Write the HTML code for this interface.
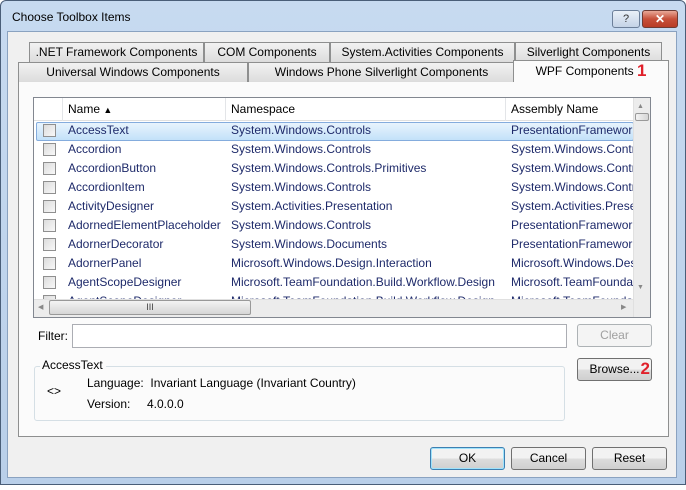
<!DOCTYPE html><html><head><style>
*{box-sizing:border-box;margin:0;padding:0}
body{width:686px;height:490px;overflow:hidden;background:#fff;font-family:"Liberation Sans",sans-serif;font-size:12px;color:#000;position:relative}
.a{position:absolute}
.win{left:0;top:0;width:686px;height:485px;background:linear-gradient(#c7daf0,#b9cfe9);border:1px solid #4a5e78;border-radius:6px 6px 0 0}
.body{left:7px;top:31px;width:670px;height:447px;background:#f0f0f0;border:1px solid #8aa2c0}
.tab{position:absolute;height:20px;border:1px solid #8e8f8f;border-bottom:none;background:linear-gradient(#f2f2f2,#dcdcdc);text-align:center;line-height:19px;font-size:12px}
.btn{position:absolute;height:23px;border:1px solid #707070;border-radius:3px;background:linear-gradient(#f2f2f2 50%,#dddddd 50%,#cfcfcf);text-align:center;line-height:21px}
.row{position:absolute;left:0;width:600px;height:19px;line-height:19px;color:#1e2a6a;white-space:nowrap}
.row span{position:absolute}
.cb{position:absolute;left:9px;top:3px;width:13px;height:13px;border:1px solid #8f8f8f;background:linear-gradient(135deg,#dcdcdc,#f8f8f8)}
</style></head><body>
<div class="a win"></div>
<div class="a" style="left:12px;top:10px;font-size:12px">Choose Toolbox Items</div>
<div class="a" style="left:612px;top:10px;width:28px;height:18px;border:1px solid #6c7f99;border-radius:3px;background:linear-gradient(#e9f0f8,#c4d3e6);text-align:center;font-size:11px;line-height:16px;color:#333">?</div>
<div class="a" style="left:642px;top:10px;width:36px;height:18px;border:1px solid #6e3b34;border-radius:3px;background:linear-gradient(#e8a898,#c7503a 50%,#b83c26);text-align:center;color:#fff;font-weight:bold;line-height:16px">✕</div>
<div class="a body"></div>
<!-- panel -->
<div class="a" style="left:18px;top:80px;width:651px;height:357px;background:#fbfbfb;border:1px solid #8e8f8f"></div>
<div class="tab" style="left:29px;top:42px;width:175px">.NET Framework Components</div>
<div class="tab" style="left:204px;top:42px;width:126px">COM Components</div>
<div class="tab" style="left:330px;top:42px;width:185px">System.Activities Components</div>
<div class="tab" style="left:515px;top:42px;width:147px">Silverlight Components</div>
<div class="tab" style="left:18px;top:62px;width:230px">Universal Windows Components</div>
<div class="tab" style="left:248px;top:62px;width:267px">Windows Phone Silverlight Components</div>
<div class="tab" style="left:513px;top:60px;width:156px;height:22px;background:#fbfbfb;border-color:#8e8f8f">WPF Components <b style="color:#e0202a;font-size:17px;vertical-align:-1px">1</b></div>
<!-- list -->
<div class="a" style="left:33px;top:97px;width:618px;height:221px;border:1px solid #828790;background:#fff;overflow:hidden">
 <div class="a" style="left:0;top:0;width:600px;height:23px;border-bottom:1px solid #e0e0e0;background:#fff">
  <div class="a" style="left:28px;top:0;width:1px;height:23px;background:#e3e5e8"></div>
  <div class="a" style="left:191px;top:0;width:1px;height:23px;background:#e3e5e8"></div>
  <div class="a" style="left:471px;top:0;width:1px;height:23px;background:#e3e5e8"></div>
  <span class="a" style="left:34px;top:4px">Name <span style="font-size:9px">▲</span></span>
  <span class="a" style="left:197px;top:4px">Namespace</span>
  <span class="a" style="left:477px;top:4px">Assembly Name</span>
 </div>
 <div class="a" style="left:2px;top:24px;width:598px;height:19px;border:1px solid #84acdd;border-radius:2px;background:linear-gradient(#e8f4fd,#c3e1f9)"></div>
 <div style="position:absolute;left:0;top:23px">
 <div class="row" style="top:0"><div class="cb"></div><span style="left:34px">AccessText</span><span style="left:197px">System.Windows.Controls</span><span style="left:477px">PresentationFramework</span></div>
 <div class="row" style="top:19px"><div class="cb"></div><span style="left:34px">Accordion</span><span style="left:197px">System.Windows.Controls</span><span style="left:477px">System.Windows.Controls</span></div>
 <div class="row" style="top:38px"><div class="cb"></div><span style="left:34px">AccordionButton</span><span style="left:197px">System.Windows.Controls.Primitives</span><span style="left:477px">System.Windows.Controls</span></div>
 <div class="row" style="top:57px"><div class="cb"></div><span style="left:34px">AccordionItem</span><span style="left:197px">System.Windows.Controls</span><span style="left:477px">System.Windows.Controls</span></div>
 <div class="row" style="top:76px"><div class="cb"></div><span style="left:34px">ActivityDesigner</span><span style="left:197px">System.Activities.Presentation</span><span style="left:477px">System.Activities.Presentation</span></div>
 <div class="row" style="top:95px"><div class="cb"></div><span style="left:34px">AdornedElementPlaceholder</span><span style="left:197px">System.Windows.Controls</span><span style="left:477px">PresentationFramework</span></div>
 <div class="row" style="top:114px"><div class="cb"></div><span style="left:34px">AdornerDecorator</span><span style="left:197px">System.Windows.Documents</span><span style="left:477px">PresentationFramework</span></div>
 <div class="row" style="top:133px"><div class="cb"></div><span style="left:34px">AdornerPanel</span><span style="left:197px">Microsoft.Windows.Design.Interaction</span><span style="left:477px">Microsoft.Windows.Design</span></div>
 <div class="row" style="top:152px"><div class="cb"></div><span style="left:34px">AgentScopeDesigner</span><span style="left:197px">Microsoft.TeamFoundation.Build.Workflow.Design</span><span style="left:477px">Microsoft.TeamFoundation</span></div>
 <div class="row" style="top:171px"><div class="cb"></div><span style="left:34px">AgentScopeDesigner</span><span style="left:197px">Microsoft.TeamFoundation.Build.Workflow.Design</span><span style="left:477px">Microsoft.TeamFoundation</span></div>
 </div>
 <!-- vscroll -->
 <div class="a" style="left:599px;top:0;width:17px;height:219px;background:#ececec;border-left:1px solid #e0e0e0"></div>
 <div class="a" style="left:603px;top:5px;font-size:7px;color:#888">▲</div>
 <div class="a" style="left:601px;top:15px;width:14px;height:8px;border:1px solid #999;border-radius:2px;background:linear-gradient(90deg,#f3f3f3,#d6d6d6)"></div>
 <div class="a" style="left:603px;top:186px;font-size:7px;color:#888">▼</div>
 <!-- hscroll -->
 <div class="a" style="left:0;top:201px;width:599px;height:18px;background:#ececec;border-top:1px solid #e0e0e0"></div>
 <div class="a" style="left:4px;top:205px;font-size:7px;color:#888">◀</div>
 <div class="a" style="left:587px;top:205px;font-size:7px;color:#888">▶</div>
 <div class="a" style="left:15px;top:202px;width:202px;height:15px;border:1px solid #999;border-radius:2px;background:linear-gradient(#f3f3f3,#d6d6d6);text-align:center;font-size:9px;line-height:13px;color:#444">III</div>
</div>
<!-- filter -->
<div class="a" style="left:38px;top:329px">Filter:</div>
<div class="a" style="left:72px;top:324px;width:495px;height:24px;border:1px solid #abadb3;background:#fff"></div>
<div class="btn" style="left:577px;top:324px;width:75px;border-color:#adb2b5;background:#f4f4f4;color:#a0a0a0">Clear</div>
<!-- group -->
<div class="a" style="left:34px;top:366px;width:531px;height:55px;border:1px solid #d5dfe5;border-radius:3px"></div>
<div class="a" style="left:40px;top:358px;background:#fbfbfb;padding:0 3px 0 2px">AccessText</div>
<div class="a" style="left:47px;top:384px">&lt;&gt;</div>
<div class="a" style="left:87px;top:376px">Language:&nbsp; Invariant Language (Invariant Country)</div>
<div class="a" style="left:87px;top:397px">Version:</div>
<div class="a" style="left:147px;top:397px">4.0.0.0</div>
<div class="btn" style="left:577px;top:358px;width:75px">Browse...<b style="color:#e0202a;font-size:17px;position:absolute;right:1px;top:-1px">2</b></div>
<!-- bottom -->
<div class="btn" style="left:430px;top:447px;width:75px;border-color:#3c7fb1;box-shadow:inset 0 0 0 1px #9fe2fb">OK</div>
<div class="btn" style="left:511px;top:447px;width:75px">Cancel</div>
<div class="btn" style="left:592px;top:447px;width:75px">Reset</div>
</body></html>
